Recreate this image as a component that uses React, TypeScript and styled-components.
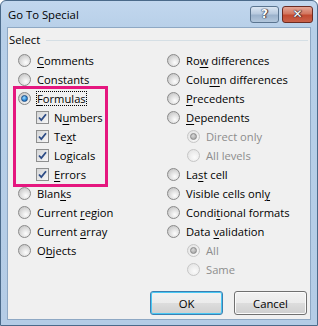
import React from "react";
import styled, { createGlobalStyle, css } from "styled-components";

const Global = createGlobalStyle`
  html, body { margin: 0; padding: 0; background: #ffffff; }
  body { font-family: "Segoe UI", "Open Sans", "Noto Sans", sans-serif; }
`;

const FONT = `"Segoe UI", "Open Sans", "Noto Sans", sans-serif`;

const Window = styled.div`
  width: 318px;
  height: 326px;
  box-sizing: border-box;
  border: 1px solid #4b6a8a;
  border-radius: 6px 6px 0 0;
  background: linear-gradient(#c2d7ee, #b7cfe8 30px, #b4cce6);
  display: flex;
  flex-direction: column;
  overflow: hidden;
`;

const TitleBar = styled.div`
  height: 25px;
  display: flex;
  align-items: center;
  padding: 0 4px 0 7px;
  flex: none;
`;

const Title = styled.div`
  font-family: ${FONT};
  font-size: 11.3px;
  color: #000;
  flex: 1;
  margin-top: 1px;
`;

const CaptionButton = styled.div<{ $close?: boolean }>`
  height: 17px;
  width: ${(p) => (p.$close ? 31 : 29)}px;
  box-sizing: border-box;
  border: 1px solid ${(p) => (p.$close ? "#6b2b22" : "#5b7590")};
  border-radius: 3px;
  margin-left: 3px;
  margin-top: 1px;
  display: flex;
  align-items: center;
  justify-content: center;
  font-family: "DejaVu Sans", sans-serif;
  font-weight: bold;
  font-size: 12px;
  color: #fff;
  text-shadow: 0 0 1px #223, 0 0 1px #223, 1px 0 1px #334;
  ${(p) =>
    p.$close
      ? css`
          background: linear-gradient(#e4a696, #d2765f 45%, #c24a30 55%, #c9624a);
        `
      : css`
          background: linear-gradient(#dbe6f2, #b8cadf 45%, #9bb2cc 55%, #b3c7dc);
        `}
`;

const Content = styled.div`
  flex: 1;
  margin: 1px 6px 5px 6px;
  border: 1px solid #8ea8c4;
  background: #f0f0f0;
  display: flex;
  flex-direction: column;
  padding: 3px 0 0 1px;
  position: relative;
`;

const GroupHeader = styled.div`
  display: flex;
  align-items: center;
  height: 17px;
  font-family: ${FONT};
  font-size: 11.3px;
  color: #000;
`;

const GroupRule = styled.div`
  flex: 1;
  height: 1px;
  background: #d5dfe5;
  margin: 1px 2px 0 6px;
`;

const Columns = styled.div`
  display: grid;
  grid-template-columns: 149px 1fr;
  padding: 3px 0 0 9px;
`;

const Column = styled.div`
  display: flex;
  flex-direction: column;
`;

const Row = styled.div<{ $indent?: number; $disabled?: boolean }>`
  height: 19px;
  display: flex;
  align-items: center;
  padding-left: ${(p) => p.$indent ?? 0}px;
  font-family: ${FONT};
  font-size: 11.2px;
  color: ${(p) => (p.$disabled ? "#8d8d8d" : "#000")};
  white-space: nowrap;
`;

const RadioCircle = styled.span<{ $checked?: boolean; $disabled?: boolean }>`
  width: 13px;
  height: 13px;
  box-sizing: border-box;
  border-radius: 50%;
  border: 1px solid ${(p) => (p.$disabled ? "#c6c6c6" : "#8a8a8a")};
  background: ${(p) =>
    p.$disabled
      ? "radial-gradient(circle at 60% 65%, #fbfbfb, #e6e6e6 75%)"
      : "radial-gradient(circle at 62% 68%, #fdfdfd, #e0e0e0 45%, #c4c4c4 85%)"};
  display: inline-flex;
  align-items: center;
  justify-content: center;
  margin-right: 5px;
  flex: none;
  &::after {
    content: "";
    display: ${(p) => (p.$checked ? "block" : "none")};
    width: 5px;
    height: 5px;
    border-radius: 50%;
    border: 1px solid ${(p) => (p.$disabled ? "#8a8a8a" : "#1f4f86")};
    background: ${(p) =>
      p.$disabled
        ? "radial-gradient(circle at 40% 35%, #d8d8d8, #9c9c9c)"
        : "radial-gradient(circle at 40% 35%, #9fdcff, #2a86d6 60%, #1a4f8f)"};
  }
`;

const CheckBox = styled.span`
  width: 13px;
  height: 13px;
  box-sizing: border-box;
  border: 1px solid #8e8f8f;
  background: linear-gradient(135deg, #d4d5d6, #f7f7f7);
  display: inline-flex;
  align-items: center;
  justify-content: center;
  margin-right: 4px;
  flex: none;
`;

const Label = styled.span<{ $focus?: boolean }>`
  padding: 0 1px;
  line-height: 15px;
  ${(p) =>
    p.$focus &&
    css`
      outline: 1px dotted #000;
      outline-offset: -1px;
    `}
`;

const Key = styled.span`
  text-decoration: underline;
  text-underline-offset: 2px;
`;

const Highlight = styled.div`
  position: relative;
  display: flex;
  flex-direction: column;
  &::after {
    content: "";
    position: absolute;
    left: -5px;
    top: -3px;
    width: 95px;
    height: 101px;
    box-sizing: border-box;
    border: 3px solid #e5177f;
    pointer-events: none;
  }
`;

const Footer = styled.div`
  margin-top: auto;
  display: flex;
  justify-content: flex-end;
  gap: 11px;
  padding: 0 3px 4px 0;
`;

const Button = styled.div<{ $default?: boolean }>`
  width: 73px;
  height: 24px;
  box-sizing: border-box;
  border-radius: 3px;
  display: flex;
  align-items: center;
  justify-content: center;
  font-family: ${FONT};
  font-size: 11.3px;
  color: #000;
  border: 1px solid ${(p) => (p.$default ? "#3c7fb1" : "#707070")};
  background: linear-gradient(#f2f2f2, #ebebeb 50%, #dddddd 50%, #cfcfcf);
  box-shadow: inset 0 0 0 1px ${(p) => (p.$default ? "#48c8f4" : "#fbfbfb")};
`;

const Check = () => (
  <svg width="11" height="11" viewBox="0 0 11 11">
    <path d="M2 5.5 L4.3 8 L9 2.2" fill="none" stroke="#2d4c86" strokeWidth="1.8" />
  </svg>
);

type Item = { pre?: string; k?: string; post?: string };

const Text = ({ pre = "", k, post = "" }: Item) => (
  <>
    {pre}
    {k ? <Key>{k}</Key> : null}
    {post}
  </>
);

const Radio = ({
  item,
  checked,
  disabled,
  indent,
  focus,
}: {
  item: Item;
  checked?: boolean;
  disabled?: boolean;
  indent?: number;
  focus?: boolean;
}) => (
  <Row $indent={indent} $disabled={disabled}>
    <RadioCircle $checked={checked} $disabled={disabled} />
    <Label $focus={focus}>
      <Text {...item} />
    </Label>
  </Row>
);

const Checked = ({ item }: { item: Item }) => (
  <Row $indent={18}>
    <CheckBox>
      <Check />
    </CheckBox>
    <Label>
      <Text {...item} />
    </Label>
  </Row>
);

export default function App() {
  return (
    <>
      <Global />
      <Window>
        <TitleBar>
          <Title>Go To Special</Title>
          <CaptionButton>?</CaptionButton>
          <CaptionButton $close>✕</CaptionButton>
        </TitleBar>
        <Content>
          <GroupHeader>
            Select
            <GroupRule />
          </GroupHeader>
          <Columns>
            <Column>
              <Radio item={{ k: "C", post: "omments" }} />
              <Radio item={{ pre: "Constants" }} />
              <Highlight>
                <Radio item={{ k: "F", post: "ormulas" }} checked focus />
                <Checked item={{ pre: "N", k: "u", post: "mbers" }} />
                <Checked item={{ pre: "Te", k: "x", post: "t" }} />
                <Checked item={{ pre: "Lo", k: "g", post: "icals" }} />
                <Checked item={{ k: "E", post: "rrors" }} />
              </Highlight>
              <Radio item={{ pre: "Blan", k: "k", post: "s" }} />
              <Radio item={{ pre: "Current ", k: "r", post: "egion" }} />
              <Radio item={{ pre: "Current ", k: "a", post: "rray" }} />
              <Radio item={{ pre: "O", k: "b", post: "jects" }} />
            </Column>
            <Column>
              <Radio item={{ pre: "Ro", k: "w", post: " differences" }} />
              <Radio item={{ pre: "Colu", k: "m", post: "n differences" }} />
              <Radio item={{ k: "P", post: "recedents" }} />
              <Radio item={{ k: "D", post: "ependents" }} />
              <Radio item={{ pre: "Direct only" }} indent={20} checked disabled />
              <Radio item={{ pre: "All levels" }} indent={20} disabled />
              <Radio item={{ pre: "La", k: "s", post: "t cell" }} />
              <Radio item={{ pre: "Visible cells onl", k: "y" }} />
              <Radio item={{ pre: "Condi", k: "t", post: "ional formats" }} />
              <Radio item={{ pre: "Data ", k: "v", post: "alidation" }} />
              <Radio item={{ pre: "All" }} indent={20} checked disabled />
              <Radio item={{ pre: "Same" }} indent={20} disabled />
            </Column>
          </Columns>
          <Footer>
            <Button $default>OK</Button>
            <Button>Cancel</Button>
          </Footer>
        </Content>
      </Window>
    </>
  );
}
